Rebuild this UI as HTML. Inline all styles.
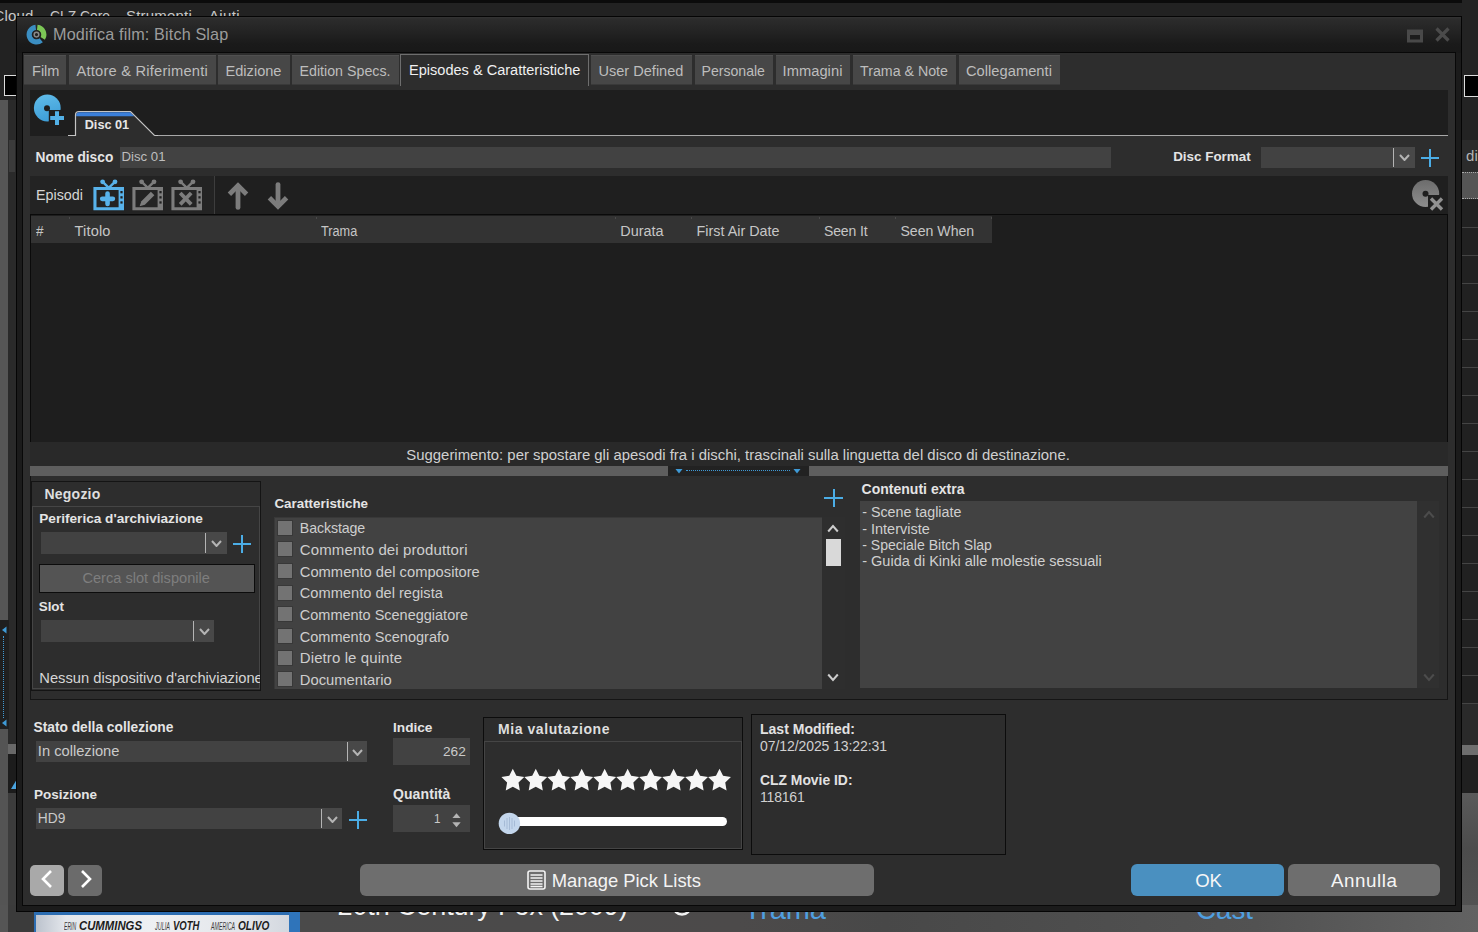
<!DOCTYPE html>
<html lang="it">
<head>
<meta charset="utf-8">
<title>Modifica film: Bitch Slap</title>
<style>
*{box-sizing:border-box;margin:0;padding:0}
html,body{width:1478px;height:932px;overflow:hidden;background:#232323;font-family:"Liberation Sans","DejaVu Sans",sans-serif;font-size:14px;color:#d2d2d2}
.a{position:absolute}
.t{position:absolute;white-space:pre;line-height:1}
</style>
</head>
<body>
<div id="app-background">
<div class="a" style="left:0px;top:0px;width:1478px;height:932px;background:#222222;"></div>
<div class="a" style="left:0px;top:0px;width:1478px;height:3px;background:#0b0b0b;"></div>
<div class="t" style="left:-6.5px;top:8.0px;font-size:15.00px;color:#c8c8c8;letter-spacing:0.162px;">Cloud</div>
<div class="t" style="left:50.0px;top:8.0px;font-size:15.00px;color:#c8c8c8;transform:scaleX(0.9228);transform-origin:0 0;">CLZ Core</div>
<div class="t" style="left:126.0px;top:8.0px;font-size:15.00px;color:#c8c8c8;letter-spacing:0.201px;">Strumenti</div>
<div class="t" style="left:209.0px;top:8.0px;font-size:15.00px;color:#c8c8c8;letter-spacing:0.364px;">Aiuti</div>
<div class="a" style="left:0px;top:100px;width:8px;height:520px;background:#565656;"></div>
<div class="a" style="left:8px;top:100px;width:9px;height:644px;background:#2a2a2a;"></div>
<div class="a" style="left:4px;top:75px;width:20px;height:21px;background:#000;border:1.5px solid #dcdcdc"></div>
<div class="a" style="left:8.5px;top:140px;width:6.5px;height:32px;background:#3b3b3b;"></div>
<div class="a" style="left:0px;top:620px;width:8.5px;height:109px;background:#1f1f1f;"></div>
<svg class="a" style="left:1px;top:626px;" width="6" height="8" viewBox="0 0 6 8"><path d="M5.5 0.5 L1 4 L5.5 7.5Z" fill="#3f9ad6"/></svg>
<svg class="a" style="left:1px;top:719px;" width="6" height="8" viewBox="0 0 6 8"><path d="M5.5 0.5 L1 4 L5.5 7.5Z" fill="#3f9ad6"/></svg>
<div class="a" style="left:3px;top:636px;width:1px;height:82px;background:transparent;border-left:1px dotted #3f9ad6"></div>
<div class="a" style="left:0px;top:729px;width:8px;height:203px;background:#545454;"></div>
<div class="a" style="left:8px;top:744px;width:9px;height:10px;background:#686868;"></div>
<div class="a" style="left:8px;top:754px;width:9px;height:40px;background:#1c1c1c;"></div>
<svg class="a" style="left:11px;top:779px;" width="6" height="10" viewBox="0 0 6 10"><path d="M6 0 L0 10 L6 10Z" fill="#4aa3df"/></svg>
<div class="a" style="left:1462px;top:0px;width:16px;height:932px;background:#232323;"></div>
<div class="a" style="left:1464px;top:75px;width:20px;height:22px;background:#000;border:1.5px solid #dcdcdc"></div>
<div class="a" style="left:1462px;top:139.5px;width:16px;height:33px;background:#2b2b2b;"></div>
<div class="t" style="left:1466.0px;top:147.5px;font-size:15.00px;color:#b4b4b4;letter-spacing:0.162px;">di</div>
<div class="a" style="left:1462px;top:172px;width:16px;height:27px;background:#555;border-top:1px dotted #aaa;border-bottom:1px dotted #aaa"></div>
<div class="a" style="left:1462px;top:199px;width:16px;height:505px;background:#212121;"></div>
<div class="a" style="left:1462px;top:227px;width:16px;height:1px;background:#444;"></div>
<div class="a" style="left:1462px;top:255px;width:16px;height:1px;background:#444;"></div>
<div class="a" style="left:1462px;top:283px;width:16px;height:1px;background:#444;"></div>
<div class="a" style="left:1462px;top:311px;width:16px;height:1px;background:#444;"></div>
<div class="a" style="left:1462px;top:339px;width:16px;height:1px;background:#444;"></div>
<div class="a" style="left:1462px;top:367px;width:16px;height:1px;background:#444;"></div>
<div class="a" style="left:1462px;top:395px;width:16px;height:1px;background:#444;"></div>
<div class="a" style="left:1462px;top:423px;width:16px;height:1px;background:#444;"></div>
<div class="a" style="left:1462px;top:451px;width:16px;height:1px;background:#444;"></div>
<div class="a" style="left:1462px;top:479px;width:16px;height:1px;background:#444;"></div>
<div class="a" style="left:1462px;top:507px;width:16px;height:1px;background:#444;"></div>
<div class="a" style="left:1462px;top:535px;width:16px;height:1px;background:#444;"></div>
<div class="a" style="left:1462px;top:563px;width:16px;height:1px;background:#444;"></div>
<div class="a" style="left:1462px;top:591px;width:16px;height:1px;background:#444;"></div>
<div class="a" style="left:1462px;top:619px;width:16px;height:1px;background:#444;"></div>
<div class="a" style="left:1462px;top:647px;width:16px;height:1px;background:#444;"></div>
<div class="a" style="left:1462px;top:675px;width:16px;height:1px;background:#444;"></div>
<div class="a" style="left:1462px;top:703px;width:16px;height:1px;background:#444;"></div>
<div class="a" style="left:1462px;top:704px;width:16px;height:41px;background:#2a2a2a;"></div>
<div class="a" style="left:1462px;top:745px;width:16px;height:10px;background:#6e6e6e;"></div>
<div class="a" style="left:1462px;top:755px;width:16px;height:38px;background:#202020;"></div>
<div class="a" style="left:0px;top:793px;width:8px;height:139px;background:#545454;"></div>
<div class="a" style="left:8px;top:793px;width:9px;height:139px;background:#3c3c3c;"></div>
<div class="a" style="left:1462px;top:793px;width:16px;height:139px;background:linear-gradient(#5a5a5a,#4c4c4c 40%,#555);"></div>
<div class="a" style="left:0px;top:905px;width:1478px;height:27px;background:linear-gradient(90deg,#555 0,#555 8px,#3b3b3b 8px,#3b3b3b 34px,#4a4a4a 300px,#4c4a4a 50%,#484848 60%,#525252 85%,#5e5e5e 96%,#626262);"></div>
<div class="a" style="left:33.8px;top:911.5px;width:266.2px;height:21px;background:linear-gradient(90deg,#b9c0cb,#e4e7ec 12%,#eef0f3 45%,#e2e5ea 80%,#cfd4dc);"></div>
<div class="a" style="left:33.8px;top:911.5px;width:266.2px;height:3.5px;background:#2c6db2;"></div>
<div class="a" style="left:33.8px;top:911.5px;width:2.4px;height:21px;background:#2c6db2;"></div>
<div class="a" style="left:289px;top:911.5px;width:11px;height:21px;background:#2f74ba;"></div>
<div class="t" style="left:63.8px;top:922.0px;font-size:10.00px;color:#3a3a3a;font-style:italic;transform:scaleX(0.5106);transform-origin:0 0;">ERIN</div>
<div class="t" style="left:78.8px;top:919.0px;font-size:13.60px;color:#1c1c1c;font-weight:bold;font-style:italic;transform:scaleX(0.8339);transform-origin:0 0;">CUMMINGS</div>
<div class="t" style="left:155.0px;top:922.0px;font-size:10.00px;color:#3a3a3a;font-style:italic;transform:scaleX(0.5508);transform-origin:0 0;">JULIA</div>
<div class="t" style="left:172.5px;top:919.0px;font-size:13.60px;color:#1c1c1c;font-weight:bold;font-style:italic;transform:scaleX(0.7014);transform-origin:0 0;">VOTH</div>
<div class="t" style="left:211.0px;top:922.0px;font-size:10.00px;color:#3a3a3a;font-style:italic;transform:scaleX(0.5267);transform-origin:0 0;">AMERICA</div>
<div class="t" style="left:238.0px;top:919.0px;font-size:13.60px;color:#1c1c1c;font-weight:bold;font-style:italic;transform:scaleX(0.7444);transform-origin:0 0;">OLIVO</div>
<div class="t" style="left:337.5px;top:893.3px;font-size:27.00px;color:#f2f2f2;letter-spacing:-0.115px;">20th Century Fox (2009)</div>
<div class="t" style="left:743.8px;top:895.0px;font-size:29.00px;color:#4f9fe0;letter-spacing:-0.143px;">Trama</div>
<div class="t" style="left:1196.0px;top:895.0px;font-size:29.00px;color:#4f9fe0;transform:scaleX(0.9559);transform-origin:0 0;">Cast</div>
<svg class="a" style="left:672px;top:896px;" width="20" height="21" viewBox="0 0 20 21"><circle cx="10" cy="10" r="8.5" fill="none" stroke="#f2f2f2" stroke-width="2.5"/></svg>
</div>
<div id="dialog" role="dialog" aria-label="Modifica film: Bitch Slap">
<div class="a" style="left:16px;top:16px;width:1446px;height:896px;background:#1b1b1b;border:1px solid #050505"></div>
<div class="a" style="left:17px;top:17px;width:1444px;height:36px;background:linear-gradient(#343434 0,#2c2c2c 2px,#222 45%,#1a1a1a 75%,#181818);"></div>
<div class="a" style="left:22px;top:52px;width:1434px;height:854px;background:#2d2d2d;border:1px solid #080808"></div>
<svg class="a" style="left:25.5px;top:24px;" width="21" height="21.5" viewBox="0 0 21 21.5"><path d="M11.26 3.34 A7.3 7.3 0 0 1 16.69 14.47" fill="none" stroke="#7cc656" stroke-width="5.2"/><path d="M15.19 16.19 A7.3 7.3 0 1 1 9.74 3.34" fill="none" stroke="#3b8ec2" stroke-width="5.2"/><circle cx="10.5" cy="10.6" r="4.4" fill="#222"/><circle cx="10.5" cy="10.6" r="2.3" fill="none" stroke="#8a8a8a" stroke-width="1.5"/></svg>
<div class="t" style="left:53.0px;top:25.8px;font-size:16.20px;color:#9c9c9c;letter-spacing:0.142px;">Modifica film: Bitch Slap</div>
<svg class="a" style="left:1407px;top:29px;" width="16" height="14" viewBox="0 0 16 14"><rect x="0" y="0.5" width="16" height="13" fill="#494949"/><rect x="3" y="6" width="10" height="4.5" fill="#1c1c1c"/></svg>
<svg class="a" style="left:1434px;top:26px;" width="17" height="17" viewBox="0 0 17 17"><path d="M2.5 2.5 L14.5 14.5 M14.5 2.5 L2.5 14.5" stroke="#4b4b4b" stroke-width="3.2" fill="none"/></svg>
<div class="a" style="left:24px;top:55px;width:42px;height:30px;background:#474747;border-top:1px solid #505050;border-bottom:1px solid #3a3a3a"></div>
<div class="t" style="left:32.0px;top:64.0px;font-size:14.56px;color:#bdbdbd;">Film</div>
<div class="a" style="left:68.5px;top:55px;width:147.0px;height:30px;background:#474747;border-top:1px solid #505050;border-bottom:1px solid #3a3a3a"></div>
<div class="t" style="left:76.5px;top:64.0px;font-size:14.70px;color:#bdbdbd;letter-spacing:0.203px;">Attore &amp; Riferimenti</div>
<div class="a" style="left:218px;top:55px;width:71.5px;height:30px;background:#474747;border-top:1px solid #505050;border-bottom:1px solid #3a3a3a"></div>
<div class="t" style="left:225.5px;top:64.0px;font-size:14.60px;color:#bdbdbd;">Edizione</div>
<div class="a" style="left:292px;top:55px;width:107px;height:30px;background:#474747;border-top:1px solid #505050;border-bottom:1px solid #3a3a3a"></div>
<div class="t" style="left:299.5px;top:64.0px;font-size:14.24px;color:#bdbdbd;">Edition Specs.</div>
<div class="a" style="left:590.5px;top:55px;width:101.5px;height:30px;background:#474747;border-top:1px solid #505050;border-bottom:1px solid #3a3a3a"></div>
<div class="t" style="left:598.5px;top:64.0px;font-size:14.56px;color:#bdbdbd;">User Defined</div>
<div class="a" style="left:694.5px;top:55px;width:78.5px;height:30px;background:#474747;border-top:1px solid #505050;border-bottom:1px solid #3a3a3a"></div>
<div class="t" style="left:701.5px;top:64.0px;font-size:14.10px;color:#bdbdbd;">Personale</div>
<div class="a" style="left:775.5px;top:55px;width:74.5px;height:30px;background:#474747;border-top:1px solid #505050;border-bottom:1px solid #3a3a3a"></div>
<div class="t" style="left:782.5px;top:64.0px;font-size:14.70px;color:#bdbdbd;letter-spacing:0.046px;">Immagini</div>
<div class="a" style="left:852.5px;top:55px;width:103.5px;height:30px;background:#474747;border-top:1px solid #505050;border-bottom:1px solid #3a3a3a"></div>
<div class="t" style="left:860.0px;top:64.0px;font-size:14.22px;color:#bdbdbd;">Trama &amp; Note</div>
<div class="a" style="left:958.5px;top:55px;width:101.5px;height:30px;background:#474747;border-top:1px solid #505050;border-bottom:1px solid #3a3a3a"></div>
<div class="t" style="left:966.0px;top:64.0px;font-size:14.70px;color:#bdbdbd;letter-spacing:0.017px;">Collegamenti</div>
<div class="a" style="left:400px;top:54px;width:189px;height:32px;background:#2d2d2d;border:1px solid #6e6e6e;border-bottom:none"></div>
<div class="t" style="left:409.0px;top:63.0px;font-size:14.55px;color:#f0f0f0;">Episodes &amp; Caratteristiche</div>
<div class="a" style="left:30px;top:90px;width:1418px;height:46px;background:#1e1e1e;"></div>
<div class="a" style="left:154px;top:135px;width:1294px;height:1.2px;background:#a8a8a8;"></div>
<svg class="a" style="left:68px;top:110px;" width="90" height="27" viewBox="0 0 90 27"><path d="M0 25.5 H7.5 V5 Q7.5 1.5 11 1.5 H62.5 L86.5 25.5 H90 V27 H0Z" fill="#2d2d2d"/>
<path d="M8.2 6.3 V4.8 Q8.2 2.2 11 2.2 H62.3 L66.3 6.3Z" fill="#3b7fd9"/>
<path d="M0 25.5 H7.5 V5 Q7.5 1.5 11 1.5 H62.5 L86.5 25.5 H90" fill="none" stroke="#c4c4c4" stroke-width="1.2"/></svg>
<div class="a" style="left:154px;top:135px;width:1px;height:1px;background:#b4b4b4;"></div>
<div class="t" style="left:84.7px;top:119.4px;font-size:12.71px;color:#e6e6e6;font-weight:bold;">Disc 01</div>
<svg class="a" style="left:33px;top:94px;" width="32" height="32" viewBox="0 0 32 32"><defs><linearGradient id="dg" x1="0" y1="0" x2="0.3" y2="1"><stop offset="0" stop-color="#62bdea"/><stop offset="1" stop-color="#3f9fd8"/></linearGradient></defs>
<circle cx="14.3" cy="14" r="13.4" fill="url(#dg)"/><circle cx="14" cy="14.2" r="3" fill="#1e1e1e"/>
<rect x="15.8" y="16" width="17" height="17" fill="#1e1e1e"/>
<path d="M24 17.2 V31 M17.2 24 H31" stroke="#52b0e6" stroke-width="4" fill="none"/></svg>
<div class="t" style="left:35.5px;top:150.9px;font-size:13.73px;color:#e4e4e4;font-weight:bold;">Nome disco</div>
<div class="a" style="left:119.5px;top:147px;width:991px;height:20.5px;background:#424242;"></div>
<div class="t" style="left:121.5px;top:150.4px;font-size:13.20px;color:#bebebe;">Disc 01</div>
<div class="t" style="left:1173.2px;top:150.3px;font-size:13.41px;color:#e4e4e4;font-weight:bold;">Disc Format</div>
<div class="a" style="left:1261px;top:147px;width:153.5px;height:20.5px;background:#424242;"></div>
<div class="a" style="left:1394px;top:147px;width:20.5px;height:20.5px;background:#484848;"></div>
<div class="a" style="left:1393px;top:148px;width:1.2px;height:18.5px;background:#b4b4b4;"></div>
<svg class="a" style="left:1399.0px;top:154.25px;" width="11" height="7" viewBox="0 0 11 7"><path d="M1 1 L5.5 6 L10 1" fill="none" stroke="#b4b4b4" stroke-width="2"/></svg>
<div class="a" style="left:1421px;top:157.0px;width:18px;height:2px;background:#4bade6;"></div>
<div class="a" style="left:1429.0px;top:149px;width:2px;height:18px;background:#4bade6;"></div>
<div class="a" style="left:30px;top:176px;width:1418px;height:38px;background:#1f1f1f;"></div>
<div class="a" style="left:30px;top:176px;width:184px;height:38px;background:#232323;"></div>
<div class="a" style="left:214px;top:176px;width:1px;height:38px;background:#3d3d3d;"></div>
<div class="t" style="left:36.0px;top:188.0px;font-size:14.33px;color:#d6d6d6;">Episodi</div>
<svg class="a" style="left:92.5px;top:179px;" width="32" height="32" viewBox="0 0 32 32"><path d="M9.7 2.9 L15.8 8.8 L21.9 2.9" fill="none" stroke="#58b2ea" stroke-width="2.5"/>
<circle cx="9.6" cy="2.8" r="2.4" fill="#58b2ea"/><circle cx="22" cy="2.8" r="2.4" fill="#58b2ea"/>
<path d="M0.4 7.9 H31 V31.2 H0.4Z M3.5 11 V28.2 H25.6 V11Z" fill="#58b2ea" fill-rule="evenodd"/>
<rect x="27.4" y="12" width="2.2" height="2.3" fill="#1f1f1f"/><rect x="27.4" y="17.2" width="2.2" height="2.3" fill="#1f1f1f"/><rect x="27.4" y="22.3" width="2.2" height="2.3" fill="#1f1f1f"/>
<path d="M14.55 14.6 V25 M9.2 19.85 H19.9" stroke="#58b2ea" stroke-width="4.6" stroke-linecap="round" fill="none"/></svg>
<svg class="a" style="left:131.9px;top:179px;" width="32" height="32" viewBox="0 0 32 32"><path d="M9.7 2.9 L15.8 8.8 L21.9 2.9" fill="none" stroke="#7c7c7c" stroke-width="2.5"/>
<circle cx="9.6" cy="2.8" r="2.4" fill="#7c7c7c"/><circle cx="22" cy="2.8" r="2.4" fill="#7c7c7c"/>
<path d="M0.4 7.9 H31 V31.2 H0.4Z M3.5 11 V28.2 H25.6 V11Z" fill="#7c7c7c" fill-rule="evenodd"/>
<rect x="27.4" y="12" width="2.2" height="2.3" fill="#1f1f1f"/><rect x="27.4" y="17.2" width="2.2" height="2.3" fill="#1f1f1f"/><rect x="27.4" y="22.3" width="2.2" height="2.3" fill="#1f1f1f"/>
<path d="M7.6 27.3 L9.4 22.2 L18.9 12.7 L22.4 16.2 L12.9 25.7Z" fill="#7c7c7c"/></svg>
<svg class="a" style="left:171.2px;top:179px;" width="32" height="32" viewBox="0 0 32 32"><path d="M9.7 2.9 L15.8 8.8 L21.9 2.9" fill="none" stroke="#7c7c7c" stroke-width="2.5"/>
<circle cx="9.6" cy="2.8" r="2.4" fill="#7c7c7c"/><circle cx="22" cy="2.8" r="2.4" fill="#7c7c7c"/>
<path d="M0.4 7.9 H31 V31.2 H0.4Z M3.5 11 V28.2 H25.6 V11Z" fill="#7c7c7c" fill-rule="evenodd"/>
<rect x="27.4" y="12" width="2.2" height="2.3" fill="#1f1f1f"/><rect x="27.4" y="17.2" width="2.2" height="2.3" fill="#1f1f1f"/><rect x="27.4" y="22.3" width="2.2" height="2.3" fill="#1f1f1f"/>
<path d="M9.2 14 L20.2 25.4 M20.2 14 L9.2 25.4" stroke="#7c7c7c" stroke-width="3.8" fill="none"/></svg>
<svg class="a" style="left:224px;top:180px;" width="28" height="32" viewBox="0 0 28 32"><path d="M14 6 V27.4" stroke="#7c7c7c" stroke-width="4.8" stroke-linecap="round" fill="none"/><path d="M5.4 14.2 L14 5.6 L22.6 14.2" stroke="#7c7c7c" stroke-width="4.8" fill="none" stroke-linejoin="miter"/></svg>
<svg class="a" style="left:263.8px;top:180px;" width="28" height="32" viewBox="0 0 28 32"><path d="M14 4.6 V26" stroke="#7c7c7c" stroke-width="4.8" stroke-linecap="round" fill="none"/><path d="M5.4 17.8 L14 26.4 L22.6 17.8" stroke="#7c7c7c" stroke-width="4.8" fill="none" stroke-linejoin="miter"/></svg>
<svg class="a" style="left:1411px;top:179px;" width="34" height="33" viewBox="0 0 34 33"><defs><linearGradient id="gg" x1="0" y1="0" x2="0" y2="1"><stop offset="0" stop-color="#6c6c6c"/><stop offset="1" stop-color="#8e8e8e"/></linearGradient></defs>
<circle cx="14.6" cy="14.5" r="13.6" fill="url(#gg)"/><circle cx="14.5" cy="14.8" r="3" fill="#1f1f1f"/>
<rect x="17" y="16" width="18" height="18" fill="#1f1f1f"/>
<path d="M20 19.5 L31 30.5 M31 19.5 L20 30.5" stroke="#919191" stroke-width="3.4" fill="none"/></svg>
<div class="a" style="left:30px;top:214px;width:1418px;height:228px;background:#1e1e1e;border:1px solid #0a0a0a;border-bottom:none"></div>
<div class="a" style="left:31px;top:215.5px;width:961px;height:27.5px;background:#333333;"></div>
<div class="t" style="left:36.3px;top:223.6px;font-size:14.00px;color:#c6c6c6;transform:scaleX(0.9631);transform-origin:0 0;">#</div>
<div class="t" style="left:74.5px;top:223.6px;font-size:14.60px;color:#c6c6c6;letter-spacing:0.157px;">Titolo</div>
<div class="t" style="left:321.1px;top:223.6px;font-size:14.00px;color:#c6c6c6;transform:scaleX(0.9091);transform-origin:0 0;">Trama</div>
<div class="t" style="left:620.3px;top:223.6px;font-size:14.43px;color:#c6c6c6;">Durata</div>
<div class="t" style="left:696.6px;top:223.6px;font-size:14.33px;color:#c6c6c6;">First Air Date</div>
<div class="t" style="left:824.0px;top:223.6px;font-size:14.00px;color:#c6c6c6;letter-spacing:-0.138px;">Seen It</div>
<div class="t" style="left:900.4px;top:223.6px;font-size:14.14px;color:#c6c6c6;">Seen When</div>
<div class="a" style="left:69px;top:217px;width:1px;height:2px;background:#4a4a4a;"></div>
<div class="a" style="left:316px;top:217px;width:1px;height:2px;background:#4a4a4a;"></div>
<div class="a" style="left:615px;top:217px;width:1px;height:2px;background:#4a4a4a;"></div>
<div class="a" style="left:691px;top:217px;width:1px;height:2px;background:#4a4a4a;"></div>
<div class="a" style="left:819px;top:217px;width:1px;height:2px;background:#4a4a4a;"></div>
<div class="a" style="left:895px;top:217px;width:1px;height:2px;background:#4a4a4a;"></div>
<div class="a" style="left:991px;top:217px;width:1px;height:2px;background:#4a4a4a;"></div>
<div class="a" style="left:30px;top:442px;width:1418px;height:24px;background:#292929;"></div>
<div class="t" style="left:406.3px;top:448.0px;font-size:14.90px;color:#d0d0d0;letter-spacing:0.005px;">Suggerimento: per spostare gli apesodi fra i dischi, trascinali sulla linguetta del disco di destinazione.</div>
<div class="a" style="left:30px;top:466px;width:1418px;height:10px;background:#5e5e5e;"></div>
<div class="a" style="left:667.5px;top:466px;width:141px;height:10px;background:#222;"></div>
<svg class="a" style="left:675px;top:468px;" width="8" height="6" viewBox="0 0 8 6"><path d="M0.5 1 H7.5 L4 5.5Z" fill="#3f9ad6"/></svg>
<svg class="a" style="left:793px;top:468px;" width="8" height="6" viewBox="0 0 8 6"><path d="M0.5 1 H7.5 L4 5.5Z" fill="#3f9ad6"/></svg>
<div class="a" style="left:686px;top:470px;width:104px;height:1px;background:transparent;border-top:1.5px dotted #3f9ad6"></div>
<div class="a" style="left:30px;top:476px;width:1418px;height:223.5px;background:#2d2d2d;border:1px solid #151515;border-top:none"></div>
<div class="a" style="left:30.5px;top:481px;width:230.5px;height:209.5px;background:#2d2d2d;border:1px solid #141414"></div>
<div class="t" style="left:44.5px;top:486.9px;font-size:14.00px;color:#dedede;font-weight:bold;letter-spacing:0.223px;">Negozio</div>
<div class="a" style="left:32px;top:505.5px;width:227.5px;height:183.5px;background:#2d2d2d;border:1px solid #454545"></div>
<div class="t" style="left:39.3px;top:512.3px;font-size:13.62px;color:#e4e4e4;font-weight:bold;">Periferica d&#x27;archiviazione</div>
<div class="a" style="left:40.5px;top:532px;width:186.5px;height:21.5px;background:#424242;"></div>
<div class="a" style="left:206px;top:532px;width:21.0px;height:21.5px;background:#484848;"></div>
<div class="a" style="left:205px;top:533px;width:1.2px;height:19.5px;background:#b4b4b4;"></div>
<svg class="a" style="left:211.25px;top:539.75px;" width="11" height="7" viewBox="0 0 11 7"><path d="M1 1 L5.5 6 L10 1" fill="none" stroke="#b4b4b4" stroke-width="2"/></svg>
<div class="a" style="left:233.3px;top:543.0px;width:18px;height:2px;background:#4bade6;"></div>
<div class="a" style="left:241.3px;top:535px;width:2px;height:18px;background:#4bade6;"></div>
<div class="a" style="left:38.5px;top:564px;width:216.5px;height:29px;background:#545454;border:1px solid #0c0c0c"></div>
<div class="t" style="left:82.4px;top:571.4px;font-size:14.61px;color:#7e7e7e;">Cerca slot disponile</div>
<div class="t" style="left:38.8px;top:600.2px;font-size:13.40px;color:#e4e4e4;font-weight:bold;letter-spacing:-0.077px;">Slot</div>
<div class="a" style="left:40.5px;top:620px;width:173.5px;height:21.5px;background:#424242;"></div>
<div class="a" style="left:193.5px;top:620px;width:20.5px;height:21.5px;background:#484848;"></div>
<div class="a" style="left:192.5px;top:621px;width:1.2px;height:19.5px;background:#b4b4b4;"></div>
<svg class="a" style="left:198.5px;top:627.75px;" width="11" height="7" viewBox="0 0 11 7"><path d="M1 1 L5.5 6 L10 1" fill="none" stroke="#b4b4b4" stroke-width="2"/></svg>
<div class="a" style="left:39.3px;top:664px;width:221.2px;height:24px;overflow:hidden">
<div class="t" style="left:0.0px;top:6.5px;font-size:14.71px;color:#d6d6d6;">Nessun dispositivo d&#x27;archiviazione</div>
</div>
<div class="t" style="left:274.4px;top:496.6px;font-size:13.40px;color:#e4e4e4;font-weight:bold;letter-spacing:-0.009px;">Caratteristiche</div>
<div class="a" style="left:273.5px;top:516.5px;width:548.5px;height:172px;background:#424242;border-top:1px solid #383838;border-left:1px solid #383838"></div>
<div class="a" style="left:822px;top:516.5px;width:23px;height:172px;background:#2e2e2e;"></div>
<div class="a" style="left:276.6px;top:519.5px;width:16px;height:16px;background:#737373;border:1px solid #383838"></div>
<div class="t" style="left:299.8px;top:521.3px;font-size:14.20px;color:#cecece;letter-spacing:-0.101px;">Backstage</div>
<div class="a" style="left:276.6px;top:541.0px;width:16px;height:16px;background:#737373;border:1px solid #383838"></div>
<div class="t" style="left:299.8px;top:541.9px;font-size:15.00px;color:#cecece;letter-spacing:0.118px;">Commento dei produttori</div>
<div class="a" style="left:276.6px;top:562.5px;width:16px;height:16px;background:#737373;border:1px solid #383838"></div>
<div class="t" style="left:299.8px;top:564.6px;font-size:14.73px;color:#cecece;">Commento del compositore</div>
<div class="a" style="left:276.6px;top:584.5px;width:16px;height:16px;background:#737373;border:1px solid #383838"></div>
<div class="t" style="left:299.8px;top:586.2px;font-size:14.63px;color:#cecece;">Commento del regista</div>
<div class="a" style="left:276.6px;top:606.0px;width:16px;height:16px;background:#737373;border:1px solid #383838"></div>
<div class="t" style="left:299.8px;top:607.9px;font-size:14.49px;color:#cecece;">Commento Sceneggiatore</div>
<div class="a" style="left:276.6px;top:627.5px;width:16px;height:16px;background:#737373;border:1px solid #383838"></div>
<div class="t" style="left:299.8px;top:629.5px;font-size:14.52px;color:#cecece;">Commento Scenografo</div>
<div class="a" style="left:276.6px;top:649.5px;width:16px;height:16px;background:#737373;border:1px solid #383838"></div>
<div class="t" style="left:299.8px;top:650.2px;font-size:15.00px;color:#cecece;letter-spacing:0.094px;">Dietro le quinte</div>
<div class="a" style="left:276.6px;top:671.0px;width:16px;height:16px;background:#737373;border:1px solid #383838"></div>
<div class="t" style="left:299.8px;top:672.8px;font-size:14.78px;color:#cecece;">Documentario</div>
<svg class="a" style="left:827px;top:523.5px;" width="12" height="9" viewBox="0 0 12 9"><path d="M1.2 7.5 L6 2 L10.8 7.5" fill="none" stroke="#cdcdcd" stroke-width="2"/></svg>
<div class="a" style="left:826px;top:538.7px;width:15px;height:27.7px;background:#d9d9d9;"></div>
<svg class="a" style="left:827px;top:673px;" width="12" height="9" viewBox="0 0 12 9"><path d="M1.2 1.5 L6 7 L10.8 1.5" fill="none" stroke="#cdcdcd" stroke-width="2"/></svg>
<div class="a" style="left:824.3px;top:497.2px;width:18.4px;height:2px;background:#4bade6;"></div>
<div class="a" style="left:832.5px;top:489px;width:2px;height:18.4px;background:#4bade6;"></div>
<div class="t" style="left:861.5px;top:482.0px;font-size:14.00px;color:#e4e4e4;font-weight:bold;letter-spacing:0.022px;">Contenuti extra</div>
<div class="a" style="left:859.7px;top:500.5px;width:557.5px;height:187.5px;background:#424242;"></div>
<div class="a" style="left:1417.2px;top:500.5px;width:21.5px;height:187.5px;background:#303030;"></div>
<div class="t" style="left:862.2px;top:505.0px;font-size:14.28px;color:#d0d0d0;">- Scene tagliate</div>
<div class="t" style="left:862.2px;top:521.5px;font-size:14.48px;color:#d0d0d0;">- Interviste</div>
<div class="t" style="left:862.2px;top:537.9px;font-size:14.07px;color:#d0d0d0;">- Speciale Bitch Slap</div>
<div class="t" style="left:862.2px;top:554.4px;font-size:14.53px;color:#d0d0d0;">- Guida di Kinki alle molestie sessuali</div>
<svg class="a" style="left:1422.5px;top:509.5px;" width="12" height="9" viewBox="0 0 12 9"><path d="M1.2 7.5 L6 2 L10.8 7.5" fill="none" stroke="#4c4c4c" stroke-width="2"/></svg>
<svg class="a" style="left:1422.5px;top:672.5px;" width="12" height="9" viewBox="0 0 12 9"><path d="M1.2 1.5 L6 7 L10.8 1.5" fill="none" stroke="#4c4c4c" stroke-width="2"/></svg>
<div class="t" style="left:33.5px;top:720.8px;font-size:13.75px;color:#e4e4e4;font-weight:bold;">Stato della collezione</div>
<div class="a" style="left:35.8px;top:741px;width:331.5px;height:21.3px;background:#424242;"></div>
<div class="a" style="left:347.5px;top:741px;width:19.80000000000001px;height:21.3px;background:#484848;"></div>
<div class="a" style="left:346.5px;top:742px;width:1.2px;height:19.3px;background:#b4b4b4;"></div>
<svg class="a" style="left:352.15px;top:748.65px;" width="11" height="7" viewBox="0 0 11 7"><path d="M1 1 L5.5 6 L10 1" fill="none" stroke="#b4b4b4" stroke-width="2"/></svg>
<div class="t" style="left:37.8px;top:744.0px;font-size:14.70px;color:#cacaca;">In collezione</div>
<div class="t" style="left:34.0px;top:788.0px;font-size:13.50px;color:#e4e4e4;font-weight:bold;">Posizione</div>
<div class="a" style="left:35.8px;top:808px;width:306.2px;height:21.3px;background:#424242;"></div>
<div class="a" style="left:322px;top:808px;width:20.0px;height:21.3px;background:#484848;"></div>
<div class="a" style="left:321px;top:809px;width:1.2px;height:19.3px;background:#b4b4b4;"></div>
<svg class="a" style="left:326.75px;top:815.65px;" width="11" height="7" viewBox="0 0 11 7"><path d="M1 1 L5.5 6 L10 1" fill="none" stroke="#b4b4b4" stroke-width="2"/></svg>
<div class="t" style="left:37.8px;top:812.0px;font-size:13.75px;color:#cacaca;">HD9</div>
<div class="a" style="left:348.5px;top:818.8px;width:18px;height:2px;background:#4bade6;"></div>
<div class="a" style="left:356.5px;top:810.8px;width:2px;height:18px;background:#4bade6;"></div>
<div class="t" style="left:393.0px;top:720.8px;font-size:13.67px;color:#e4e4e4;font-weight:bold;">Indice</div>
<div class="a" style="left:393px;top:738px;width:76.5px;height:26.8px;background:#424242;"></div>
<div class="t" style="left:443.0px;top:745.0px;font-size:13.66px;color:#cacaca;">262</div>
<div class="t" style="left:393.0px;top:787.0px;font-size:14.00px;color:#e4e4e4;font-weight:bold;letter-spacing:0.090px;">Quantità</div>
<div class="a" style="left:393px;top:805.3px;width:76.5px;height:26.5px;background:#424242;"></div>
<div class="t" style="left:434.2px;top:812.0px;font-size:13.60px;color:#cacaca;transform:scaleX(0.8592);transform-origin:0 0;">1</div>
<svg class="a" style="left:452px;top:812.5px;" width="9" height="5.5" viewBox="0 0 9 5.5"><path d="M0.3 5.2 L4.5 0.3 L8.7 5.2Z" fill="#b4b4b4"/></svg>
<svg class="a" style="left:452px;top:822px;" width="9" height="5.5" viewBox="0 0 9 5.5"><path d="M0.3 0.3 L4.5 5.2 L8.7 0.3Z" fill="#b4b4b4"/></svg>
<div class="a" style="left:482.5px;top:716.5px;width:260.5px;height:133px;background:#2d2d2d;border:1.5px solid #0c0c0c"></div>
<div class="a" style="left:484px;top:741px;width:257.5px;height:107.5px;background:#2d2d2d;border:1px solid #454545"></div>
<div class="t" style="left:498.0px;top:722.0px;font-size:14.00px;color:#dedede;font-weight:bold;letter-spacing:0.569px;">Mia valutazione</div>
<svg class="a" style="left:498px;top:766px;" width="236" height="28" viewBox="0 0 236 28"><polygon points="14.80,2.70 18.33,9.85 26.21,10.99 20.51,16.55 21.85,24.41 14.80,20.70 7.75,24.41 9.09,16.55 3.39,10.99 11.27,9.85" fill="#f6f6f6"/><polygon points="37.77,2.70 41.30,9.85 49.18,10.99 43.48,16.55 44.82,24.41 37.77,20.70 30.72,24.41 32.06,16.55 26.36,10.99 34.24,9.85" fill="#f6f6f6"/><polygon points="60.74,2.70 64.27,9.85 72.15,10.99 66.45,16.55 67.79,24.41 60.74,20.70 53.69,24.41 55.03,16.55 49.33,10.99 57.21,9.85" fill="#f6f6f6"/><polygon points="83.71,2.70 87.24,9.85 95.12,10.99 89.42,16.55 90.76,24.41 83.71,20.70 76.66,24.41 78.00,16.55 72.30,10.99 80.18,9.85" fill="#f6f6f6"/><polygon points="106.68,2.70 110.21,9.85 118.09,10.99 112.39,16.55 113.73,24.41 106.68,20.70 99.63,24.41 100.97,16.55 95.27,10.99 103.15,9.85" fill="#f6f6f6"/><polygon points="129.65,2.70 133.18,9.85 141.06,10.99 135.36,16.55 136.70,24.41 129.65,20.70 122.60,24.41 123.94,16.55 118.24,10.99 126.12,9.85" fill="#f6f6f6"/><polygon points="152.62,2.70 156.15,9.85 164.03,10.99 158.33,16.55 159.67,24.41 152.62,20.70 145.57,24.41 146.91,16.55 141.21,10.99 149.09,9.85" fill="#f6f6f6"/><polygon points="175.59,2.70 179.12,9.85 187.00,10.99 181.30,16.55 182.64,24.41 175.59,20.70 168.54,24.41 169.88,16.55 164.18,10.99 172.06,9.85" fill="#f6f6f6"/><polygon points="198.56,2.70 202.09,9.85 209.97,10.99 204.27,16.55 205.61,24.41 198.56,20.70 191.51,24.41 192.85,16.55 187.15,10.99 195.03,9.85" fill="#f6f6f6"/><polygon points="221.53,2.70 225.06,9.85 232.94,10.99 227.24,16.55 228.58,24.41 221.53,20.70 214.48,24.41 215.82,16.55 210.12,10.99 218.00,9.85" fill="#f6f6f6"/></svg>
<div class="a" style="left:512px;top:816.8px;width:214.5px;height:9.2px;background:#ffffff;border-radius:4.6px"></div>
<svg class="a" style="left:498.2px;top:811.7px;" width="23" height="23" viewBox="0 0 23 23"><circle cx="11.4" cy="11.4" r="10.7" fill="#c3d6ec"/>
<path d="M6.5 8.5 V14.5 M9 6 V17 M11.5 5 V18 M14 6 V17 M16.5 8.5 V14.5" stroke="#a6bbd6" stroke-width="1" fill="none"/></svg>
<div class="a" style="left:751px;top:714px;width:255px;height:140.5px;background:#2d2d2d;border:1.5px solid #0c0c0c"></div>
<div class="t" style="left:760.0px;top:722.0px;font-size:14.00px;color:#e2e2e2;font-weight:bold;letter-spacing:0.008px;">Last Modified:</div>
<div class="t" style="left:760.0px;top:739.0px;font-size:14.00px;color:#d0d0d0;letter-spacing:-0.077px;">07/12/2025 13:22:31</div>
<div class="t" style="left:760.0px;top:773.8px;font-size:13.88px;color:#e2e2e2;font-weight:bold;">CLZ Movie ID:</div>
<div class="t" style="left:760.0px;top:789.8px;font-size:14.00px;color:#d0d0d0;letter-spacing:-0.197px;">118161</div>
<div class="a" style="left:30.3px;top:864.5px;width:34px;height:31px;background:#a9a9a9;border-radius:5px"></div>
<svg class="a" style="left:40px;top:869px;" width="14" height="20" viewBox="0 0 14 20"><path d="M11 2 L3 10 L11 18" fill="none" stroke="#ffffff" stroke-width="2.6"/></svg>
<div class="a" style="left:68.4px;top:864.5px;width:34px;height:31px;background:#6b6b6b;border-radius:5px"></div>
<svg class="a" style="left:79px;top:869px;" width="14" height="20" viewBox="0 0 14 20"><path d="M3 2 L11 10 L3 18" fill="none" stroke="#ffffff" stroke-width="2.6"/></svg>
<div class="a" style="left:360px;top:864px;width:514px;height:32px;background:#6e6e6e;border-radius:6px"></div>
<svg class="a" style="left:527px;top:870px;" width="19" height="20" viewBox="0 0 19 20"><rect x="1" y="1" width="17" height="18" rx="2" fill="none" stroke="#f4f4f4" stroke-width="1.6"/>
<path d="M3.5 5 H15.5 M3.5 8 H15.5 M3.5 11 H15.5 M3.5 14 H15.5 M3.5 16.6 H15.5" stroke="#f4f4f4" stroke-width="1.5" fill="none"/></svg>
<div class="t" style="left:551.7px;top:872.2px;font-size:18.40px;color:#f4f4f4;">Manage Pick Lists</div>
<div class="a" style="left:1131.2px;top:864px;width:152.4px;height:32px;background:#4a90c0;border-radius:6px"></div>
<div class="t" style="left:1195.2px;top:871.9px;font-size:18.60px;color:#f6f6f6;letter-spacing:-0.037px;">OK</div>
<div class="a" style="left:1287.5px;top:864px;width:152.5px;height:32px;background:#6e6e6e;border-radius:6px"></div>
<div class="t" style="left:1331.0px;top:871.9px;font-size:18.80px;color:#f6f6f6;letter-spacing:0.555px;">Annulla</div>
</div>
</body>
</html>
